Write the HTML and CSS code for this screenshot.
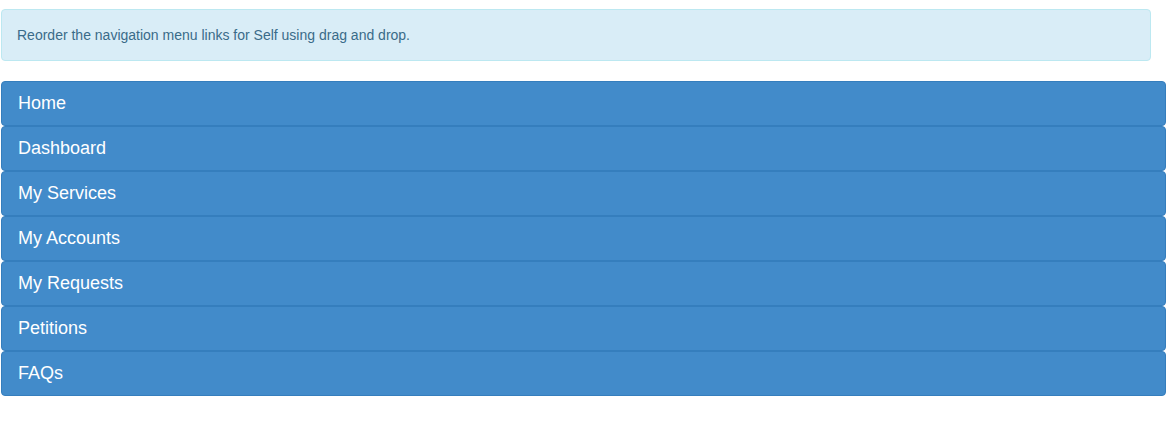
FILE: index.html
```html
<!DOCTYPE html>
<html lang="en">
<head>
<meta charset="utf-8">
<title>Reorder navigation</title>
<link rel="stylesheet" href="styles.css">
</head>
<body>
<div class="page">
  <div class="alert">Reorder the navigation menu links for Self using drag and drop.</div>
  <ul class="menu">
    <li class="menu-item">Home</li>
    <li class="menu-item">Dashboard</li>
    <li class="menu-item">My Services</li>
    <li class="menu-item">My Accounts</li>
    <li class="menu-item">My Requests</li>
    <li class="menu-item">Petitions</li>
    <li class="menu-item">FAQs</li>
  </ul>
</div>
</body>
</html>
```
FILE: styles.css
```css
html, body {
  margin: 0;
  padding: 0;
  background: #fff;
  font-family: "Liberation Sans", Arial, Helvetica, sans-serif;
}
.page {
  padding: 9px 10px 0 1px;
  width: 1165px;
}
.alert {
  width: 1118px;
  padding: 15px;
  border: 1px solid #bce8f1;
  border-radius: 4px;
  background: #d9edf7;
  color: #3a6b89;
  font-size: 14px;
  line-height: 20px;
}
.menu {
  list-style: none;
  margin: 20px 0 0;
  padding: 0;
  display: flex;
  flex-direction: column;
}
.menu-item {
  padding: 11px 16px;
  border: 1px solid #357ebd;
  border-radius: 4px;
  background: #428bca;
  color: #fff;
  font-size: 18px;
  line-height: 21px;
}
```
